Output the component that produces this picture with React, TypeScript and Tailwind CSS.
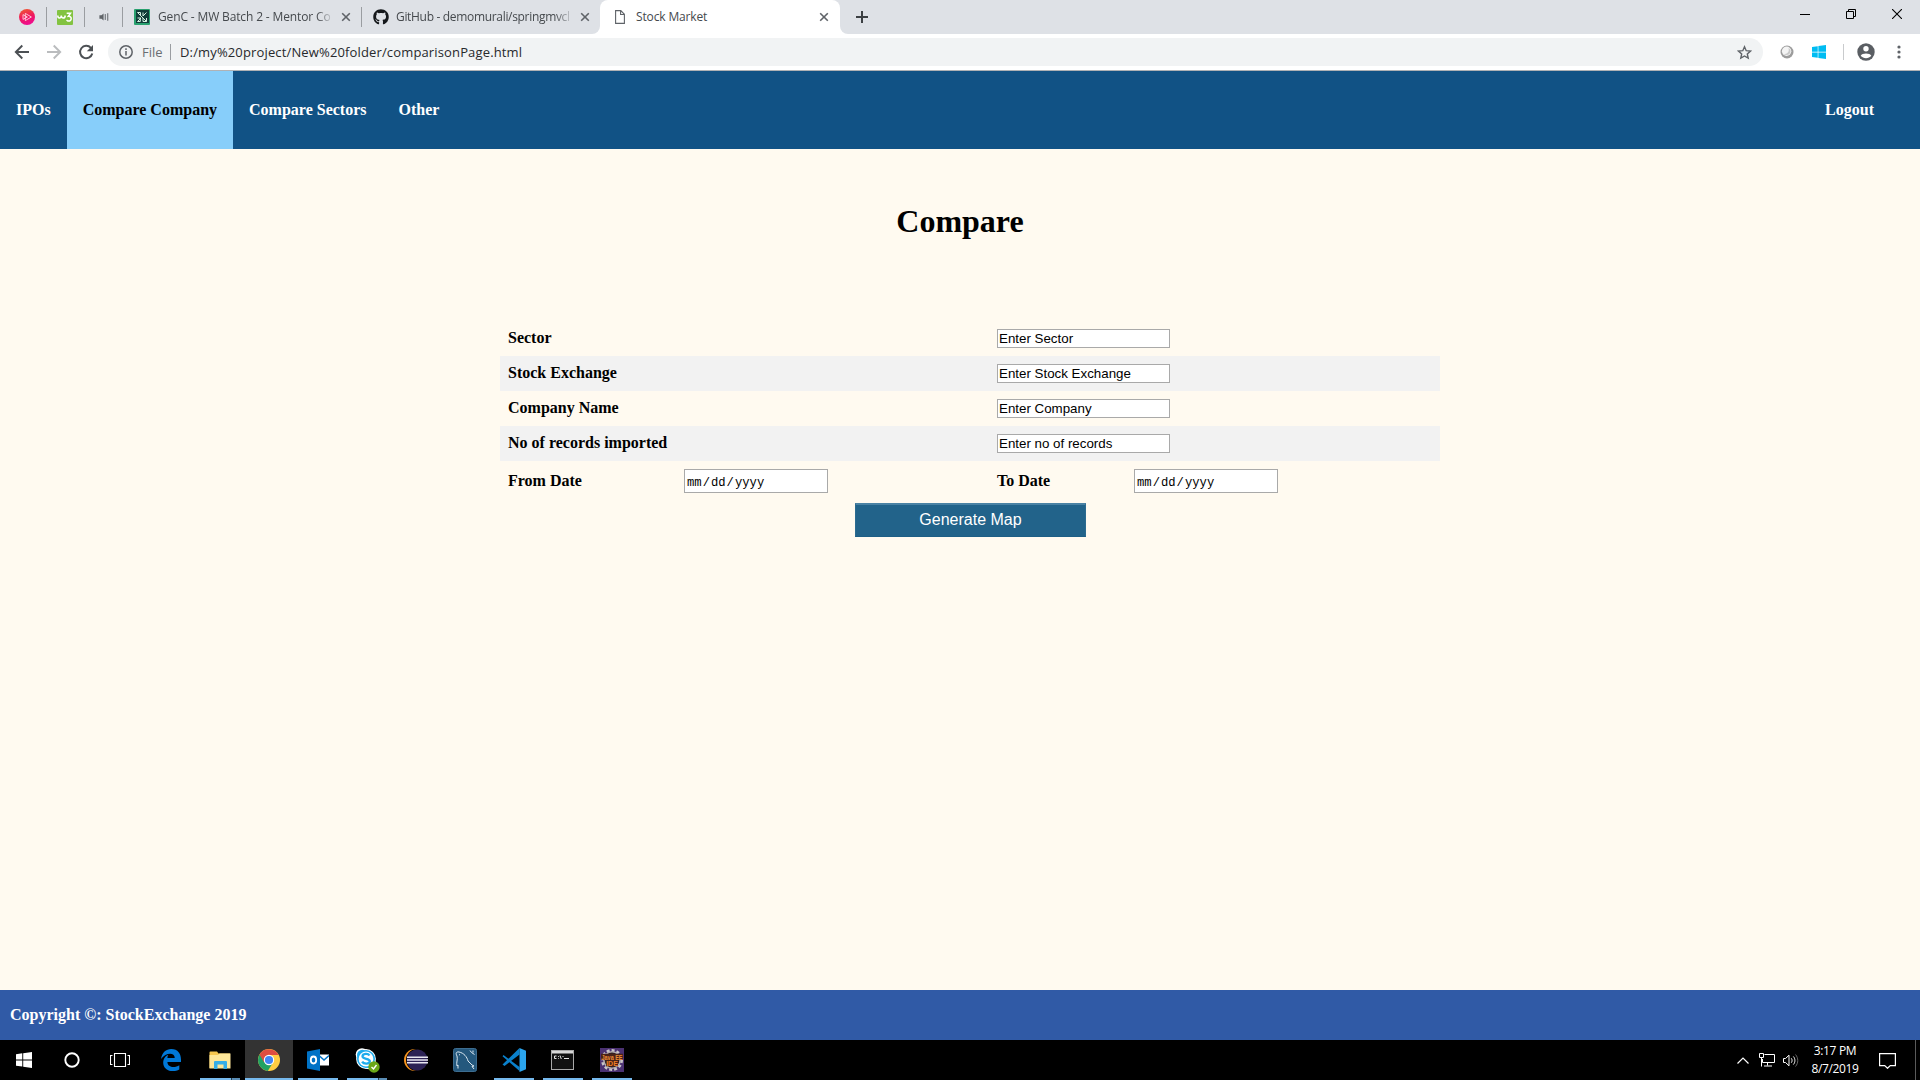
import React from 'react';
import { FaGithub, FaWindows } from 'react-icons/fa';

const UI = "font-['Open_Sans','Noto_Sans',sans-serif]";

function CloseX({ className = '' }: { className?: string }) {
  return (
    <svg className={`h-2.5 w-2.5 shrink-0 ${className}`} viewBox="0 0 10 10" fill="none" stroke="#5f6368" strokeWidth="1.6">
      <path d="M1.2 1.2l7.6 7.6M8.8 1.2l-7.6 7.6" />
    </svg>
  );
}

function Divider() {
  return <div className="h-5 w-px shrink-0 bg-[#9a9da1]" />;
}

function TabStrip() {
  return (
    <div className="flex h-[34px] items-center bg-[#dee1e6] text-[12px] text-[#45494d]">
      <svg className="ml-[19px] h-4 w-4 shrink-0" viewBox="0 0 16 16">
        <defs>
          <linearGradient id="ps" x1="0" y1="0" x2=".3" y2="1">
            <stop offset="0" stopColor="#f0602c" />
            <stop offset=".6" stopColor="#ef1760" />
            <stop offset="1" stopColor="#ee0e8c" />
          </linearGradient>
        </defs>
        <circle cx="8" cy="8" r="8" fill="url(#ps)" />
        <path d="M6.3 4.4L12.4 8l-6.100 3.600z M4 5.600v4.800l4.400-2.400z" fill="none" stroke="#ffd3e0" strokeWidth=".9" />
      </svg>
      <div className="ml-[11px]"><Divider /></div>
      <svg className="ml-[10px] h-[15px] w-4 shrink-0" viewBox="0 0 16 15">
        <rect width="16" height="15" rx="1" fill="#83c341" />
        <path d="M.8 5.500c0 3.400 3.200 3.400 3.500 0 .3 3.400 3.400 3.400 4 0M9.700 3.200h3.800L11.300 6.300c4.200-.3 3.600 5.500-.4 4.700l-1.400-1" fill="none" stroke="#fff" strokeWidth="1.500" />
      </svg>
      <div className="ml-[11px]"><Divider /></div>
      <svg className="ml-[14px] h-[10px] w-[10px] shrink-0" viewBox="0 0 11 12" fill="none" stroke="#5f6368">
        <path d="M0 4h2.500L5 1.800v8.400L2.500 8H0z" fill="#5f6368" stroke="none" />
        <path d="M7 2.500v7M10 1.500v9" strokeWidth="1.200" />
      </svg>
      <div className="ml-[13px]"><Divider /></div>
      <svg className="ml-[11px] h-4 w-4 shrink-0" viewBox="0 0 16 16">
        <rect width="16" height="16" rx="1" fill="#28a06e" />
        <rect x="2" y="1" width="13" height="13" fill="#103c38" />
        <path d="M3.500 3.500h3v3M12.500 3.500L9 7V3.500M3.500 12.500L7 9H3.500M12.500 12.500L3.500 3.500M9 9v3.500h3.500V9M3.500 12.500h2.800V9" fill="none" stroke="#d6f1e2" strokeWidth="1" />
      </svg>
      <div className="ml-2 w-[176px] shrink-0 overflow-hidden whitespace-nowrap tracking-[-0.14px] [mask-image:linear-gradient(90deg,#000_90%,transparent_100%)]">GenC - MW Batch 2 - Mentor Co</div>
      <CloseX className="ml-[7px]" />
      <div className="ml-[10px]"><Divider /></div>
      <FaGithub className="ml-[11px] h-4 w-4 shrink-0 text-[#15181b]" />
      <div className="ml-[7px] w-[178px] shrink-0 overflow-hidden whitespace-nowrap tracking-[-0.32px] [mask-image:linear-gradient(90deg,#000_89%,transparent_100%)]">GitHub - demomurali/springmvcl</div>
      <CloseX className="ml-[6px]" />
      <div className="ml-[2px] flex h-[34px] w-2 shrink-0 self-end bg-white"><div className="h-full w-full rounded-br-lg bg-[#dee1e6]" /></div>
      <div className="flex h-[34px] w-[240px] shrink-0 items-center rounded-t-lg bg-white">
        <svg className="ml-[15px] h-[14px] w-[10px] shrink-0" viewBox="0 0 10 14" fill="none" stroke="#5f6368" strokeWidth="1.100">
          <path d="M.6.600h5.200l3.600 3.700v9.100H.6zM5.600.800v3.700h3.600" />
        </svg>
        <div className="ml-[11px] w-[183px] tracking-[-0.14px]">Stock Market</div>
        <CloseX />
      </div>
      <div className="flex h-[34px] w-2 shrink-0 bg-white"><div className="h-full w-full rounded-bl-lg bg-[#dee1e6]" /></div>
      <svg className="ml-2 h-3 w-3 shrink-0" viewBox="0 0 12 12" stroke="#3c4043" strokeWidth="2"><path d="M6 0v12M0 6h12" /></svg>
      <div className="mb-[6px] ml-auto mr-[18px] flex items-center gap-9">
        <svg className="h-[10px] w-[10px]" viewBox="0 0 10 10" stroke="#000"><path d="M0 5.500h10" /></svg>
        <svg className="h-[10px] w-[10px]" viewBox="0 0 10 10" fill="none" stroke="#000"><path d="M.5 2.500h7v7h-7zM2.500 2.500v-2h7v7h-2" /></svg>
        <svg className="h-[10px] w-[10px]" viewBox="0 0 10 10" stroke="#000" strokeWidth="1.100"><path d="M0 0l10 10M10 0L0 10" /></svg>
      </div>
    </div>
  );
}

function Toolbar() {
  return (
    <div className="flex h-[37px] items-center border-b border-[#b0b2b5] bg-white text-[13px]">
      <svg className="ml-[14px] h-4 w-4 shrink-0" viewBox="0 0 16 16" fill="none" stroke="#4c5054" strokeWidth="1.900"><path d="M15 8H2M8.300 1.500L1.800 8l6.500 6.500" /></svg>
      <svg className="ml-4 h-4 w-4 shrink-0" viewBox="0 0 16 16" fill="none" stroke="#babcbe" strokeWidth="1.900"><path d="M1 8h13M7.700 1.500L14.200 8l-6.500 6.500" /></svg>
      <svg className="ml-4 h-4 w-4 shrink-0" viewBox="0 0 16 16">
        <path d="M12.900 3.800a6.200 6.200 0 1 0 1.400 5.800" fill="none" stroke="#4c5054" strokeWidth="2" />
        <path d="M15 1v6.200H8.800z" fill="#4c5054" />
      </svg>
      <div className="ml-[14px] flex h-7 w-[1655px] shrink-0 items-center rounded-full bg-[#f1f3f4]">
        <svg className="ml-[11px] h-[14px] w-[14px] shrink-0" viewBox="0 0 14 14" fill="none" stroke="#5f6368" strokeWidth="1.500"><circle cx="7" cy="7" r="6.200" /><path d="M7 6v4.500M7 3.300v1.600" /></svg>
        <div className="ml-[9px] w-[28px] pt-px text-[#6a6e72]">File</div>
        <div className="h-4 w-px bg-[#9a9da1]" />
        <div className="ml-[9px] pt-px tracking-[0.145px] text-[#27292c]">D:/my%20project/New%20folder/comparisonPage.html</div>
        <svg className="ml-auto mr-[11px] h-[15px] w-[15px]" viewBox="0 0 15 15" fill="none" stroke="#5f6368" strokeWidth="1.400"><path d="M7.500 1.800l1.700 3.900 4.300.4-3.200 2.900.9 4.200-3.700-2.200-3.700 2.200.9-4.200L1.500 6.100l4.300-.4z" /></svg>
      </div>
      <svg className="ml-[17px] h-[14px] w-[14px] shrink-0" viewBox="0 0 14 14"><circle cx="7" cy="7" r="6.500" fill="#9c9c9c" /><circle cx="6.600" cy="6.300" r="4.700" fill="#f4f4f4" /><path d="M8.500 3c1 4-1 6-5 6 3 2 7 1 7-3 0-1.500-1-2.500-2-3z" fill="#c9c9c9" /></svg>
      <FaWindows className="ml-[17px] h-4 w-4 shrink-0 text-[#00bcf2]" />
      <div className="ml-[16px] h-4 w-px bg-[#c9cbcd]" />
      <svg className="ml-[13px] h-[18px] w-[18px] shrink-0" viewBox="0 0 18 18"><circle cx="9" cy="9" r="8.700" fill="#5a5e63" /><circle cx="9" cy="5.800" r="2.700" fill="#fff" /><path d="M3.700 12.700c1.300-3.100 9.300-3.100 10.600 0-2.500 3.300-8.100 3.300-10.600 0z" fill="#fff" /></svg>
      <svg className="ml-[22px] h-[14px] w-[4px] shrink-0" viewBox="0 0 4 14" fill="#5f6368"><circle cx="2" cy="2" r="1.600" /><circle cx="2" cy="7" r="1.600" /><circle cx="2" cy="12" r="1.600" /></svg>
    </div>
  );
}

function Nav() {
  return (
    <nav className="flex h-[78px] items-center bg-[#115285] text-[16px] leading-[18px] font-bold text-white">
      <a className="flex h-full items-center px-4">IPOs</a>
      <a className="flex h-full items-center bg-[#87cefa] px-4 text-black">Compare Company</a>
      <a className="flex h-full items-center px-4">Compare Sectors</a>
      <a className="flex h-full items-center px-4">Other</a>
      <a className="mr-[30px] ml-auto flex h-full items-center px-4">Logout</a>
    </nav>
  );
}

const fields = [
  { label: 'Sector', value: 'Enter Sector' },
  { label: 'Stock Exchange', value: 'Enter Stock Exchange' },
  { label: 'Company Name', value: 'Enter Company' },
  { label: 'No of records imported', value: 'Enter no of records' },
];

function DateBox() {
  return (
    <div className="flex h-6 w-36 items-center gap-[1px] border border-[#a9a9a9] bg-white pt-[3px] pl-[2px] font-['Liberation_Mono',monospace] text-[12.2px] leading-[18px]">
      <span>mm</span><span>/</span><span>dd</span><span>/</span><span>yyyy</span>
    </div>
  );
}

function Form() {
  return (
    <main className="h-[841px] bg-[#fffaf0] text-[16px] leading-[18px] text-black">
      <h1 className="pt-[54px] text-center text-[32px] leading-[37px] font-bold">Compare</h1>
      <div className="mt-[81px] ml-[500px] w-[940px] font-bold">
        {fields.map((f) => (
          <div key={f.label} className="flex h-[35px] items-center px-2 even:bg-[#f2f2f2]">
            <div className="mb-px w-[489px]">{f.label}</div>
            <div className="flex h-[19px] w-[173px] items-center border border-[#a9a9a9] bg-white pl-px font-['Liberation_Sans',Arial,sans-serif] text-[13.333px] leading-[15px] font-normal">{f.value}</div>
          </div>
        ))}
        <div className="flex h-10 items-center px-2">
          <div className="w-[176px]">From Date</div>
          <div className="w-[313px] font-normal"><DateBox /></div>
          <div className="w-[137px]">To Date</div>
          <div className="font-normal"><DateBox /></div>
        </div>
        <button className="mx-auto mt-[2px] flex h-[34px] w-[231px] items-center justify-center border-t-2 border-r border-b border-l border-t-[#4a82a4] border-r-[#2c6b90] border-b-[#1d5f86] border-l-[#2c6b90] bg-[#22638a] pb-[2px] pl-px font-['Liberation_Sans',Arial,sans-serif] text-[16px] font-normal text-white">Generate Map</button>
      </div>
    </main>
  );
}

function TaskItem({ children, active = false, line = '' }: { children: React.ReactNode; active?: boolean; line?: '' | 'full' | 'run' | 'multi' }) {
  return (
    <div className={`flex h-10 w-12 shrink-0 flex-col items-center ${active ? 'bg-[#333333]' : ''}`}>
      <div className="flex h-[38px] shrink-0 items-center pt-[2px]">{children}</div>
      {line === 'full' && <div className="h-[2px] w-12 shrink-0 bg-[#76b9ed]" />}
      {line === 'run' && <div className="h-[2px] w-10 shrink-0 bg-[#76b9ed]" />}
      {line === 'multi' && <div className="flex h-[2px] w-10 shrink-0"><div className="w-[31px] bg-[#76b9ed]" /><div className="w-px bg-[#24394a]" /><div className="w-2 bg-[#5a8db5]" /></div>}
    </div>
  );
}

function Taskbar() {
  return (
    <div className="flex h-10 bg-black text-white">
      <TaskItem><svg className="h-4 w-4" viewBox="0 0 16 16" fill="#fff"><path d="M0 2.200l6.300-.9v6.200H0zM7.200 1.200L16 0v7.500H7.200zM0 8.400h6.300v6.200L0 13.700zM7.200 8.400H16V16l-8.800-1.300z" /></svg></TaskItem>
      <TaskItem><svg className="h-4 w-4" viewBox="0 0 16 16" fill="none" stroke="#fff" strokeWidth="1.900"><circle cx="8" cy="8" r="6.700" /></svg></TaskItem>
      <TaskItem><svg className="h-[14px] w-5" viewBox="0 0 20 14" fill="none" stroke="#fff" strokeWidth="1.100"><path d="M4.500.500h11v13h-11zM2.500 2.500h-2v9h2M17.500 2.500h2v9h-2" /></svg></TaskItem>
      <div className="ml-[3px] flex gap-px">
        <TaskItem>
          <svg className="h-[22px] w-5" viewBox="0 0 20 22" fill="#0078d7"><path d="M0 10C1 3.500 5 0 10.200 0 17 0 20 5 20 10.500V13H6.400c.2 6 8 6 11.900 3.200v4.300C11 24.500 2 21 2.200 13.500c.1-4 2.600-6.700 5.100-7.700C6.700 6.700 6.500 8 6.400 8.900h7.300C13.800 3 4.500 3.500 0 10z" /></svg>
        </TaskItem>
        <TaskItem line="multi">
          <svg className="h-[18px] w-[22px]" viewBox="0 0 22 18"><path d="M.5 1.500q0-1 1-1H8l1.500 2H21V17H.5z" fill="#f5c64f" /><path d="M.5 4H9l1.500-1.500H21.500V17.500H.5z" fill="#fde699" /><path d="M5 18v-7q0-1 1-1h11q1 0 1 1v7h-3.500v-4.500h-6V18z" fill="#36aee8" /></svg>
        </TaskItem>
        <TaskItem active line="full">
          <svg className="h-[22px] w-[22px]" viewBox="0 0 22 22"><circle cx="11" cy="11" r="11" fill="#ffcd42" /><path d="M11 11L1.500 5.500A11 11 0 0 0 9.800 21.900L15 13.500z" fill="#20a263" /><path d="M1.500 5.500A11 11 0 0 1 20.600 6H11L6.200 13.500z" fill="#de4d41" /><circle cx="11" cy="11" r="5.200" fill="#fff" /><circle cx="11" cy="11" r="4.100" fill="#4285f4" /></svg>
        </TaskItem>
        <TaskItem line="run">
          <svg className="h-[22px] w-[22px]" viewBox="0 0 22 22"><path d="M12 5.500h10v11H12z" fill="#fff" /><path d="M12 6.500l5 4.500 5-4.500" fill="none" stroke="#0072c6" strokeWidth="1.500" /><path d="M0 2.500L13 0v22L0 19.500z" fill="#0072c6" /><ellipse cx="6.500" cy="11" rx="2.700" ry="3.500" fill="none" stroke="#fff" strokeWidth="1.800" /></svg>
        </TaskItem>
        <TaskItem line="multi">
          <svg className="h-[25px] w-[25px]" viewBox="0 0 25 25"><circle cx="7" cy="6.500" r="6.300" fill="#fff" /><circle cx="14.500" cy="15" r="6.300" fill="#fff" /><circle cx="11" cy="11" r="9.900" fill="#fff" /><circle cx="7.300" cy="7" r="5.300" fill="#1daced" /><circle cx="14.300" cy="14.800" r="5.300" fill="#1daced" /><circle cx="11" cy="11" r="9" fill="#1daced" /><circle cx="11" cy="11" r="7.400" fill="#fff" /><path d="M14.500 7.500C13 5 7.500 5.500 7.500 8.300c0 3.400 7.300 1.800 7.300 5 0 2.900-6 3.300-7.700.4" fill="none" stroke="#1daced" strokeWidth="2.300" /><circle cx="19" cy="19" r="5.700" fill="#6ba718" /><path d="M16.500 19l2 2 3-4" fill="none" stroke="#fff" strokeWidth="1.400" /></svg>
        </TaskItem>
        <TaskItem>
          <svg className="h-[22px] w-6" viewBox="0 0 24 22"><circle cx="11" cy="11" r="11" fill="#f7941e" /><circle cx="13" cy="11" r="11" fill="#000" /><circle cx="13.200" cy="11" r="10.500" fill="#2c2255" /><path d="M3 8.200h21M3 11h21M3 13.800h21" stroke="#e9e7f2" strokeWidth="1.500" /></svg>
        </TaskItem>
        <TaskItem>
          <svg className="h-6 w-6" viewBox="0 0 24 24"><rect x=".5" y=".5" width="23" height="23" rx="2" fill="#24587d" stroke="#3d6d90" /><path d="M5 20.500V17l-1 1C3 14 5 12 4 8 2.500 5.500 3 3.500 6 4c5 1 8 5 9 9l4 4 2 1-2 .5 2 2.500M6 6.500l1 .5M17 2.500l1.500 2 3 2M20 2.500v2" fill="none" stroke="#dce9f2" strokeWidth="1" /></svg>
        </TaskItem>
        <TaskItem line="run">
          <svg className="h-6 w-6" viewBox="0 0 24 24"><path d="M1.500 7L17.500 19v4L.5 8.200z M.5 16.500L17.500 0v6.500L2.500 18z" fill="#0a80cb" /><path d="M17.500 0L24 2.800v18.400L17.500 24z" fill="#2aa5ef" /></svg>
        </TaskItem>
        <TaskItem line="run">
          <svg className="mr-px h-5 w-[23px]" viewBox="0 0 23 20"><rect x=".5" y=".5" width="22" height="19" fill="#111" stroke="#a8a8a8" /><path d="M1 1h21v2.500H1z" fill="#d8d8d8" /><path d="M5.500 6H3.500v2.500h2M7.500 6v.8M7.500 8v.7M9 5.500l1.300 3.500M12 6v1M13 8.500h5" fill="none" stroke="#e5e5e5" /></svg>
        </TaskItem>
        <TaskItem line="run">
          <svg className="h-6 w-6" viewBox="0 0 24 24"><rect width="24" height="24" fill="#4b3172" /><circle cx="12" cy="12" r="9.700" fill="none" stroke="#c9c5c8" strokeWidth="2.600" strokeDasharray="3 2" /><circle cx="12" cy="12" r="8.200" fill="#302023" stroke="#b5aeb0" strokeWidth="1.600" /><path d="M1 5.800h22v6H1zM6 11.800h12v6.500H6z" fill="#4a2318" /><text x="12" y="11.500" textAnchor="middle" textLength="21" lengthAdjust="spacingAndGlyphs" fontFamily="Liberation Sans" fontSize="7" fontWeight="bold" fill="#ee8d35">Java EE</text><text x="12" y="17.800" textAnchor="middle" fontFamily="Liberation Sans" fontSize="7" fontWeight="bold" fill="#ee7d25">IDE</text></svg>
        </TaskItem>
      </div>
      <div className="ml-auto flex items-center">
        <svg className="h-[7px] w-3" viewBox="0 0 12 7" fill="none" stroke="#fff" strokeWidth="1.200"><path d="M.5 6.500L6 1l5.500 5.500" /></svg>
        <svg className="ml-[10px] h-[14px] w-4" viewBox="0 0 16 14" fill="none" stroke="#fff"><path d="M5.500 1.500h10v8h-12V6M8.500 9.500v3M5 13h8M.5.500h4v4h-4zM2.500 4.500v9" /></svg>
        <svg className="ml-[8px] h-[15px] w-4" viewBox="0 0 16 15" fill="none" stroke="#fff"><path d="M.5 5.500h2L6 2.200v10.600L2.500 9.500h-2zM8.300 5.300c1 1.200 1 3.200 0 4.400M10.400 3.500c2 2.300 2 5.700 0 8" /><path d="M12.500 1.500c3 3.500 3 8.500 0 12" stroke="#666" /></svg>
        <div className="ml-[12px] w-[48px] text-center text-[12px] leading-[18px] tracking-[-0.35px] whitespace-nowrap">3:17 PM<br />8/7/2019</div>
        <svg className="mt-[2px] ml-[20px] h-4 w-[17px]" viewBox="0 0 17 16" fill="none" stroke="#fff" strokeWidth="1.200"><path d="M.6.600h15.800v12h-5.100L8.500 15.300l-2.800-2.700H.6z" /></svg>
        <div className="mr-1 ml-[19px] h-10 w-px bg-[#5a5a5a]" />
      </div>
    </div>
  );
}

export default function App() {
  return (
    <div className="flex h-[1080px] w-[1920px] flex-col overflow-hidden font-['Liberation_Serif','Times_New_Roman',serif]">
      <div className={UI}>
        <TabStrip />
        <Toolbar />
      </div>
      <Nav />
      <Form />
      <footer className="flex h-[50px] items-center bg-[#305aa6] pl-[10px] text-[16px] font-bold text-white">Copyright ©: StockExchange 2019</footer>
      <div className="font-['Open_Sans','Noto_Sans',sans-serif]"><Taskbar /></div>
    </div>
  );
}
